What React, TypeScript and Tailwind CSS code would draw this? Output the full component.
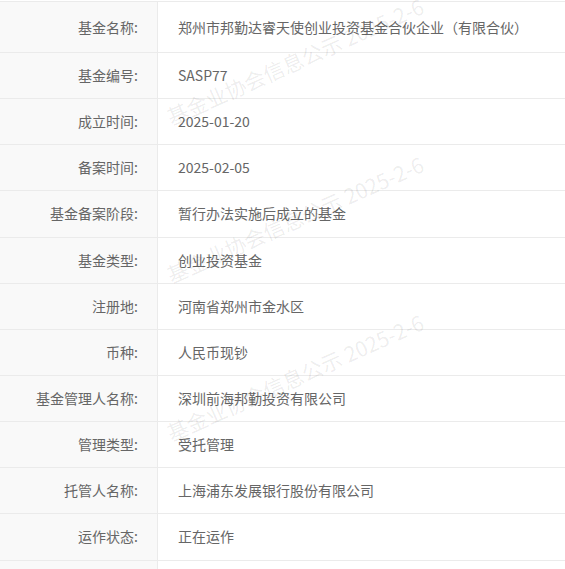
const rows = [
  { label: "基金名称:", value: "郑州市邦勤达睿天使创业投资基金合伙企业（有限合伙）" },
  { label: "基金编号:", value: "SASP77" },
  { label: "成立时间:", value: "2025-01-20" },
  { label: "备案时间:", value: "2025-02-05" },
  { label: "基金备案阶段:", value: "暂行办法实施后成立的基金" },
  { label: "基金类型:", value: "创业投资基金" },
  { label: "注册地:", value: "河南省郑州市金水区" },
  { label: "币种:", value: "人民币现钞" },
  { label: "基金管理人名称:", value: "深圳前海邦勤投资有限公司" },
  { label: "管理类型:", value: "受托管理" },
  { label: "托管人名称:", value: "上海浦东发展银行股份有限公司" },
  { label: "运作状态:", value: "正在运作" },
  { label: "", value: "" },
];

const marks = ["top-[48px]", "top-[206px]", "top-[364px]"];

export default function App() {
  return (
    <main
      className="relative h-[569px] w-[565px] overflow-hidden bg-white pt-px text-[14px] text-[#666]"
      style={{ fontFamily: '"Noto Sans CJK SC", "Noto Sans", sans-serif' }}
    >
      <div className="border-t border-[#ebebeb]">
        {rows.map((row, index) => (
          <div
            key={index}
            className={`flex border-b border-[#ebebeb] ${index === 0 ? "h-[51px]" : "h-[46.15px]"}`}
          >
            <div className="flex w-[158px] shrink-0 items-center justify-end border-r border-[#ebebeb] bg-[#f9f9f9] pr-[19px] whitespace-nowrap">
              {row.label}
            </div>
            <div className="flex items-center pl-[20px] whitespace-nowrap">{row.value}</div>
          </div>
        ))}
      </div>

      {marks.map((top) => (
        <div
          key={top}
          className={`pointer-events-none absolute left-[150px] ${top} w-[290px] rotate-[-24deg] text-center text-[21px] leading-[26px] whitespace-nowrap text-[rgba(0,0,0,0.08)]`}
        >
          基金业协会信息公示 2025-2-6
        </div>
      ))}
    </main>
  );
}
